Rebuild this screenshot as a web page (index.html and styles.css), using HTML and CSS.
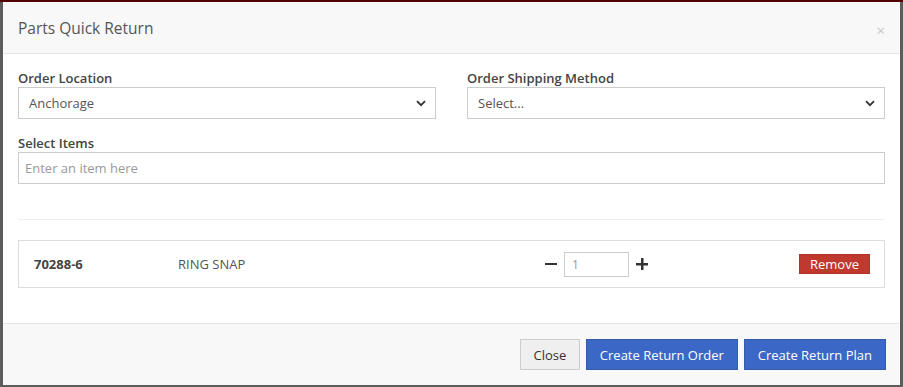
FILE: index.html
```html
<!DOCTYPE html>
<html>
<head>
<meta charset="utf-8">
<title>Parts Quick Return</title>
<link rel="stylesheet" href="styles.css">
</head>
<body>
<div class="modal">
  <div class="modal-header">
    <h4 class="modal-title">Parts Quick Return</h4>
    <span class="close">×</span>
  </div>
  <div class="modal-body">
    <div class="row">
      <div class="form-group">
        <label class="label">Order Location</label>
        <div class="select">
          <span>Anchorage</span>
          <svg class="chev" width="10" height="7" viewBox="0 0 10 7"><path d="M1 1.2 L5 5.2 L9 1.2" fill="none" stroke="#333" stroke-width="1.8"/></svg>
        </div>
      </div>
      <div class="form-group">
        <label class="label">Order Shipping Method</label>
        <div class="select">
          <span>Select...</span>
          <svg class="chev" width="10" height="7" viewBox="0 0 10 7"><path d="M1 1.2 L5 5.2 L9 1.2" fill="none" stroke="#333" stroke-width="1.8"/></svg>
        </div>
      </div>
    </div>
    <div class="form-group">
      <label class="label">Select Items</label>
      <div class="input placeholder">Enter an item here</div>
    </div>
    <hr class="divider">
    <div class="item">
      <div class="part">70288-6</div>
      <div class="desc">RING SNAP</div>
      <div class="qty">
        <span class="minus"></span>
        <div class="qty-input">1</div>
        <span class="plus"></span>
      </div>
      <button class="btn-remove">Remove</button>
    </div>
  </div>
  <div class="modal-footer">
    <button class="btn btn-default">Close</button>
    <button class="btn btn-primary">Create Return Order</button>
    <button class="btn btn-primary">Create Return Plan</button>
  </div>
</div>
</body>
</html>
```

FILE: styles.css
```css
* { box-sizing: border-box; }
html, body { margin: 0; height: 100%; }
body {
  background: linear-gradient(#540000 0, #540000 2px, #5c5c5c 2px);
  padding: 2px 3px 0 3px;
  font-family: "Open Sans", "DejaVu Sans", sans-serif;
  font-size: 13px;
  color: #333;
  overflow: hidden;
}
.modal {
  width: 897px;
  height: 383px;
  background: #fff;
  display: flex;
  flex-direction: column;
}
.modal-header {
  background: #f8f8f8;
  border-bottom: 1px solid #e5e5e5;
  padding: 15px 15px;
  height: 52px;
  display: flex;
  align-items: center;
  justify-content: space-between;
  flex: none;
}
.modal-title {
  margin: 0;
  font-size: 15.5px;
  font-weight: 400;
  color: #555;
  line-height: 20px;
}
.close {
  color: #c8c8c8;
  font-size: 15px;
  line-height: 20px;
  margin-top: 4px;
}
.modal-body {
  flex: 1;
  padding: 15px 15px 0 15px;
}
.row {
  display: grid;
  grid-template-columns: 1fr 1fr;
  column-gap: 31px;
}
.form-group {
  display: flex;
  flex-direction: column;
  margin-bottom: 15px;
}
.label {
  line-height: 18px;
  color: #444;
  font-weight: 600;
  font-size: 13px;
}
.select, .input {
  height: 32px;
  border: 1px solid #ccc;
  display: flex;
  align-items: center;
  justify-content: space-between;
  padding: 0 8px 0 10px;
  color: #555;
  font-size: 13px;
}
.input { padding-left: 6px; }
.placeholder { color: #999; }
.chev { display: block; margin-right: 1px; }
.divider {
  border: 0;
  border-top: 1px solid #eee;
  margin: 35px 0 20px 0;
}
.item {
  border: 1px solid #ddd;
  height: 48px;
  display: flex;
  align-items: center;
  padding: 0 14px 0 15px;
}
.part {
  width: 144px;
  font-weight: 700;
  color: #444;
}
.desc {
  width: 367px;
  color: #555;
}
.qty {
  display: flex;
  align-items: center;
}
.minus {
  width: 12px;
  height: 2.5px;
  background: #333;
  margin-right: 7px;
}
.plus {
  width: 12px;
  height: 12px;
  margin-left: 7px;
  background:
    linear-gradient(#333, #333) center / 12px 2.5px no-repeat,
    linear-gradient(#333, #333) center / 2.5px 12px no-repeat;
}
.qty-input {
  width: 65px;
  height: 25px;
  border: 1px solid #ccc;
  color: #999;
  font-size: 12px;
  padding-left: 7px;
  display: flex;
  align-items: center;
}
.btn-remove {
  margin-left: auto;
  width: 71px;
  height: 20px;
  background: #c0392f;
  border: 1px solid #b0342b;
  color: #fff;
  font-family: inherit;
  font-size: 13px;
  padding: 0;
  line-height: 18px;
}
.modal-footer {
  background: #f8f8f8;
  border-top: 1px solid #e5e5e5;
  height: 62px;
  flex: none;
  padding: 15px 14px 15px 15px;
  display: flex;
  justify-content: flex-end;
  align-items: flex-start;
  gap: 6px;
}
.btn {
  height: 31px;
  font-family: inherit;
  font-size: 13px;
  padding: 0 13px;
  border: 1px solid;
}
.btn-default {
  background: #efefef;
  border-color: #ccc;
  color: #333;
  width: 60px;
  padding: 0;
}
.btn-primary {
  background: #3b68c6;
  border-color: #335ca9;
  color: #fff;
}
```
